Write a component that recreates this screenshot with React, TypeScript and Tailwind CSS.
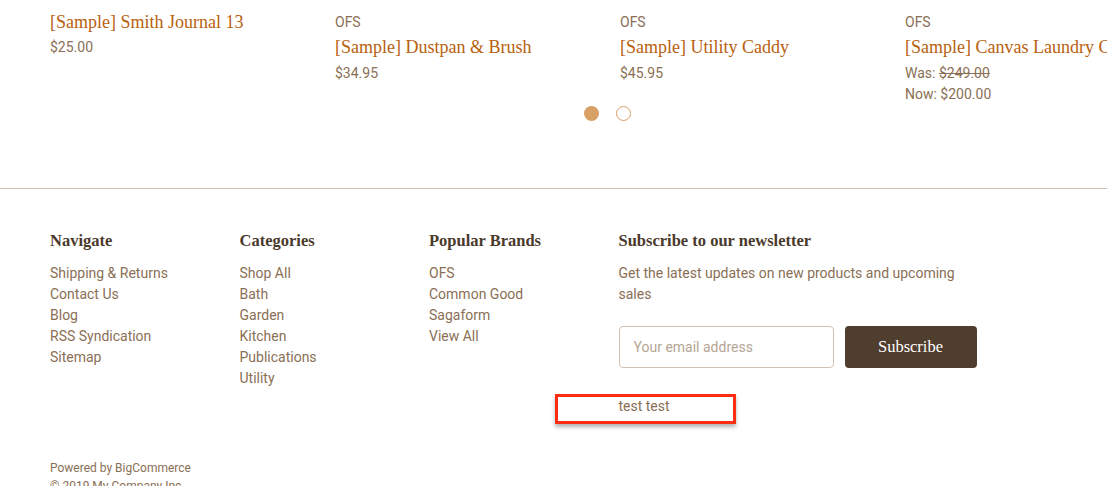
import React from "react";

const serif = "font-['Liberation_Serif',serif]";

const products = [
  { brand: "", title: "[Sample] Smith Journal 13", price: "$25.00" },
  { brand: "OFS", title: "[Sample] Dustpan & Brush", price: "$34.95" },
  { brand: "OFS", title: "[Sample] Utility Caddy", price: "$45.95" },
  { brand: "OFS", title: "[Sample] Canvas Laundry Cart", was: "$249.00", now: "$200.00" },
];

const columns = [
  { title: "Navigate", items: ["Shipping & Returns", "Contact Us", "Blog", "RSS Syndication", "Sitemap"] },
  { title: "Categories", items: ["Shop All", "Bath", "Garden", "Kitchen", "Publications", "Utility"] },
  { title: "Popular Brands", items: ["OFS", "Common Good", "Sagaform", "View All"] },
];

export default function App() {
  return (
    <div className="w-[1107px] h-[486px] overflow-hidden bg-white font-['Roboto',sans-serif] text-[#8a6f55] relative">
      {/* Carousel */}
      <div className="flex pl-[50px] whitespace-nowrap h-[103px]">
        {products.map((p) => (
          <div key={p.title} className={`w-[285px] shrink-0 ${p.brand ? "pt-[12px]" : "pt-[10px]"}`}>
            {p.brand && <div className="text-[14px] leading-[20px]">{p.brand}</div>}
            <div className={`${serif} text-[18px] leading-[24px] text-[#b8610f] ${p.brand ? "mt-[3px]" : ""}`}>
              {p.title}
            </div>
            {p.price ? (
              <div className={`text-[14px] leading-[21px] ${p.brand ? "mt-[4px]" : "mt-[3px]"}`}>{p.price}</div>
            ) : (
              <div className="text-[14px] leading-[21px] mt-[4px]">
                <div>
                  Was: <span className="line-through">{p.was}</span>
                </div>
                <div>Now: {p.now}</div>
              </div>
            )}
          </div>
        ))}
      </div>

      <div className="flex justify-center gap-[17px] mt-[3px] pl-[107px]">
        <span className="w-[15px] h-[15px] rounded-full bg-[#d9a066]" />
        <span className="w-[15px] h-[15px] rounded-full border border-[#d9a066]" />
      </div>

      <div className="mt-[67px] h-px bg-[#d6c1b1]" />

      {/* Footer */}
      <div className="flex pl-[50px] pt-[42px]">
        {columns.map((c) => (
          <div key={c.title} className="w-[189.5px] shrink-0">
            <h5 className={`${serif} font-bold text-[16.5px] leading-[20px] text-[#4a3a2c]`}>{c.title}</h5>
            <ul className="mt-[12px] text-[14px] leading-[21px]">
              {c.items.map((i) => (
                <li key={i}>{i}</li>
              ))}
            </ul>
          </div>
        ))}
        <div className="w-[360px] shrink-0">
          <h5 className={`${serif} font-bold text-[16.5px] leading-[20px] text-[#4a3a2c]`}>
            Subscribe to our newsletter
          </h5>
          <p className="mt-[12px] text-[14px] leading-[21px] w-[350px]">
            Get the latest updates on new products and upcoming sales
          </p>
          <div className="flex gap-[11px] mt-[21px]">
            <input
              placeholder="Your email address"
              className="w-[215px] h-[42px] border border-[#d6c1b1] rounded-[4px] px-[14px] text-[14px] placeholder:text-[#b5a595] outline-none"
            />
            <button className={`w-[132px] h-[42px] rounded-[4px] bg-[#4f3d2e] text-white ${serif} text-[16.5px]`}>
              Subscribe
            </button>
          </div>
          <div className="mt-[28px] text-[14px] leading-[21px]">test test</div>
        </div>
      </div>

      <div className="pl-[50px] mt-[42px] text-[12px] leading-[18px]">
        <div>Powered by BigCommerce</div>
        <div>© 2019 My Company Inc.</div>
      </div>

      {/* highlight overlay */}
      <div className="absolute left-[555px] top-[394px] w-[181px] h-[30px] border-[3px] border-[#ff2d12] shadow-[0_3px_4px_rgba(0,0,0,0.3)]" />
    </div>
  );
}
